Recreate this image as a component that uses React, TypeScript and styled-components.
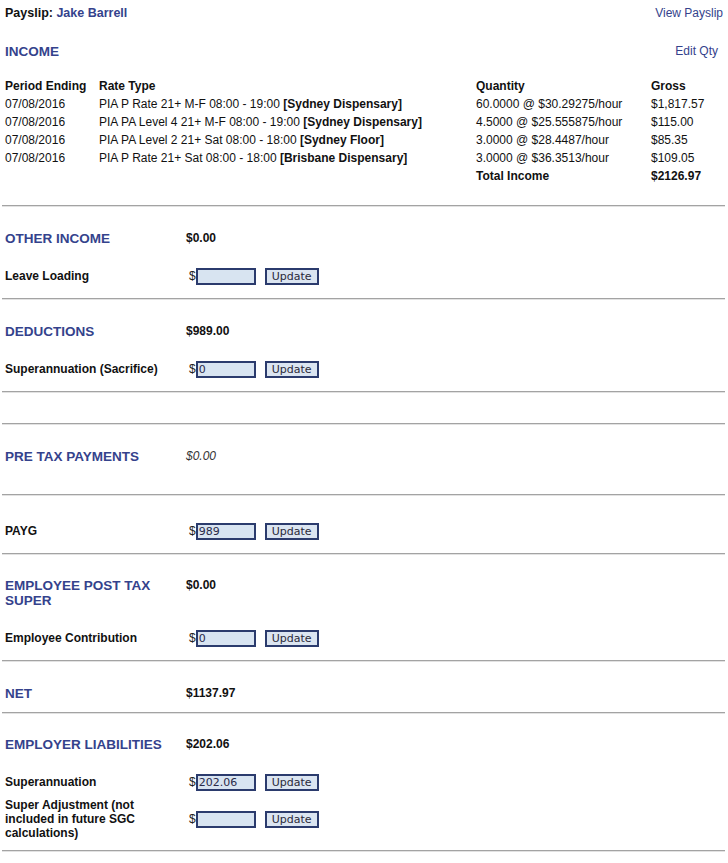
import React from "react";
import styled, { createGlobalStyle } from "styled-components";

const Global = createGlobalStyle`
  html, body { margin: 0; padding: 0; background: #fff; }
  body { font-family: "Liberation Sans", Arial, sans-serif; font-size: 12px; color: #111; }
`;

const BLUE = "#34428c";

const Page = styled.div`
  width: 728px;
  box-sizing: border-box;
  padding: 1px 3px 4px 2px;
`;

const Inner = styled.div`
  padding: 0 0 0 3px;
`;

const TopBar = styled.div`
  display: flex;
  justify-content: space-between;
  align-items: center;
  height: 24px;
  padding-right: 2px;
`;

const Title = styled.div`
  font-weight: bold;
  font-size: 12.5px;
  color: #111;
  span { color: ${BLUE}; }
`;

const Link = styled.a<{ $pr?: number }>`
  color: ${BLUE};
  text-decoration: none;
  font-size: 12px;
  padding-right: ${(p) => p.$pr ?? 0}px;
  cursor: pointer;
`;

const IncomeHead = styled.div`
  display: flex;
  justify-content: space-between;
  align-items: center;
  margin-top: 19px;
  line-height: 15px;
`;

const Heading = styled.div`
  color: ${BLUE};
  font-weight: bold;
  font-size: 13.5px;
  line-height: 15px;
`;

const Table = styled.div`
  display: grid;
  grid-template-columns: 94px 377px 175px auto;
  margin-top: 18px;
  margin-bottom: 20px;
  line-height: 18px;
`;

const Cell = styled.div<{ $bold?: boolean }>`
  font-weight: ${(p) => (p.$bold ? "bold" : "normal")};
  white-space: nowrap;
  b { font-weight: bold; }
`;

const Rule = styled.div`
  height: 0;
  border-top: 1px solid #a3a3a3;
  border-bottom: 1px solid #e2e2e2;
`;

const Section = styled.div<{ $pt?: number; $pb?: number }>`
  padding: ${(p) => p.$pt ?? 24}px 0 ${(p) => p.$pb ?? 12}px 3px;
`;

const HeadRow = styled.div`
  display: grid;
  grid-template-columns: 181px auto;
  align-items: start;
`;

const HeadText = styled(Heading)`
  width: 160px;
`;

const HeadValue = styled.div<{ $italic?: boolean }>`
  font-size: 12px;
  line-height: 15px;
  font-weight: ${(p) => (p.$italic ? "normal" : "bold")};
  font-style: ${(p) => (p.$italic ? "italic" : "normal")};
  color: ${(p) => (p.$italic ? "#333" : "#111")};
`;

const Items = styled.div<{ $mt?: number }>`
  display: flex;
  flex-direction: column;
  gap: 6px;
  margin-top: ${(p) => p.$mt ?? 20}px;
`;

const ItemRow = styled.div`
  display: grid;
  grid-template-columns: 184px auto;
  align-items: center;
  min-height: 20px;
`;

const ItemLabel = styled.div`
  font-weight: bold;
  font-size: 12px;
  line-height: 14px;
  width: 160px;
`;

const Field = styled.div`
  display: flex;
  align-items: center;
`;

const Dollar = styled.span`
  font-size: 12px;
  color: #222;
`;

const Input = styled.input`
  box-sizing: border-box;
  width: 60px;
  height: 17px;
  margin: 0;
  padding: 0 0 0 1px;
  border: 2px solid #2b3b6d;
  background: #d8e4f1;
  font-family: "DejaVu Sans", Verdana, sans-serif;
  font-size: 11px;
  color: #2a2a4a;
  outline: none;
`;

const Button = styled.button`
  box-sizing: border-box;
  width: 54px;
  height: 17px;
  margin: 0 0 0 9px;
  padding: 0;
  border: 2px solid #2b3b6d;
  background: #dbe5f1;
  font-family: "DejaVu Sans", Verdana, sans-serif;
  font-size: 11px;
  line-height: 13px;
  color: #2a2a3a;
`;

const Spacer = styled.div<{ $h: number }>`
  height: ${(p) => p.$h}px;
`;

type Line = { period: string; rate: string; loc: string; qty: string; gross: string };

const lines: Line[] = [
  { period: "07/08/2016", rate: "PIA P Rate 21+ M-F 08:00 - 19:00", loc: "[Sydney Dispensary]", qty: "60.0000 @ $30.29275/hour", gross: "$1,817.57" },
  { period: "07/08/2016", rate: "PIA PA Level 4 21+ M-F 08:00 - 19:00", loc: "[Sydney Dispensary]", qty: "4.5000 @ $25.555875/hour", gross: "$115.00" },
  { period: "07/08/2016", rate: "PIA PA Level 2 21+ Sat 08:00 - 18:00", loc: "[Sydney Floor]", qty: "3.0000 @ $28.4487/hour", gross: "$85.35" },
  { period: "07/08/2016", rate: "PIA P Rate 21+ Sat 08:00 - 18:00", loc: "[Brisbane Dispensary]", qty: "3.0000 @ $36.3513/hour", gross: "$109.05" },
];

const Item: React.FC<{ label: string; value?: string }> = ({ label, value }) => (
  <ItemRow>
    <ItemLabel>{label}</ItemLabel>
    <Field>
      <Dollar>$</Dollar>
      <Input defaultValue={value ?? ""} />
      <Button>Update</Button>
    </Field>
  </ItemRow>
);

export default function App() {
  return (
    <Page>
      <Global />
      <Inner>
        <TopBar>
          <Title>
            Payslip: <span>Jake Barrell</span>
          </Title>
          <Link>View Payslip</Link>
        </TopBar>
        <IncomeHead>
          <Heading>INCOME</Heading>
          <Link $pr={7}>Edit Qty</Link>
        </IncomeHead>
        <Table>
          <Cell $bold>Period Ending</Cell>
          <Cell $bold>Rate Type</Cell>
          <Cell $bold>Quantity</Cell>
          <Cell $bold>Gross</Cell>
          {lines.map((l, i) => (
            <React.Fragment key={i}>
              <Cell>{l.period}</Cell>
              <Cell>
                {l.rate} <b>{l.loc}</b>
              </Cell>
              <Cell>{l.qty}</Cell>
              <Cell>{l.gross}</Cell>
            </React.Fragment>
          ))}
          <Cell />
          <Cell />
          <Cell $bold>Total Income</Cell>
          <Cell $bold>$2126.97</Cell>
        </Table>
      </Inner>
      <Rule />
      <Section>
        <HeadRow>
          <HeadText>OTHER INCOME</HeadText>
          <HeadValue>$0.00</HeadValue>
        </HeadRow>
        <Items>
          <Item label="Leave Loading" />
        </Items>
      </Section>
      <Rule />
      <Section>
        <HeadRow>
          <HeadText>DEDUCTIONS</HeadText>
          <HeadValue>$989.00</HeadValue>
        </HeadRow>
        <Items>
          <Item label="Superannuation (Sacrifice)" value="0" />
        </Items>
      </Section>
      <Rule />
      <Spacer $h={30} />
      <Rule />
      <Section $pb={30}>
        <HeadRow>
          <HeadText>PRE TAX PAYMENTS</HeadText>
          <HeadValue $italic>$0.00</HeadValue>
        </HeadRow>
      </Section>
      <Rule />
      <Section $pt={25}>
        <Items $mt={0}>
          <Item label="PAYG" value="989" />
        </Items>
      </Section>
      <Rule />
      <Section $pt={23}>
        <HeadRow>
          <HeadText>EMPLOYEE POST TAX SUPER</HeadText>
          <HeadValue>$0.00</HeadValue>
        </HeadRow>
        <Items>
          <Item label="Employee Contribution" value="0" />
        </Items>
      </Section>
      <Rule />
      <Section $pt={24} $pb={11}>
        <HeadRow>
          <HeadText>NET</HeadText>
          <HeadValue>$1137.97</HeadValue>
        </HeadRow>
      </Section>
      <Rule />
      <Section $pt={23} $pb={10}>
        <HeadRow>
          <HeadText>EMPLOYER LIABILITIES</HeadText>
          <HeadValue>$202.06</HeadValue>
        </HeadRow>
        <Items>
          <Item label="Superannuation" value="202.06" />
          <Item label="Super Adjustment (not included in future SGC calculations)" />
        </Items>
      </Section>
      <Rule />
    </Page>
  );
}
